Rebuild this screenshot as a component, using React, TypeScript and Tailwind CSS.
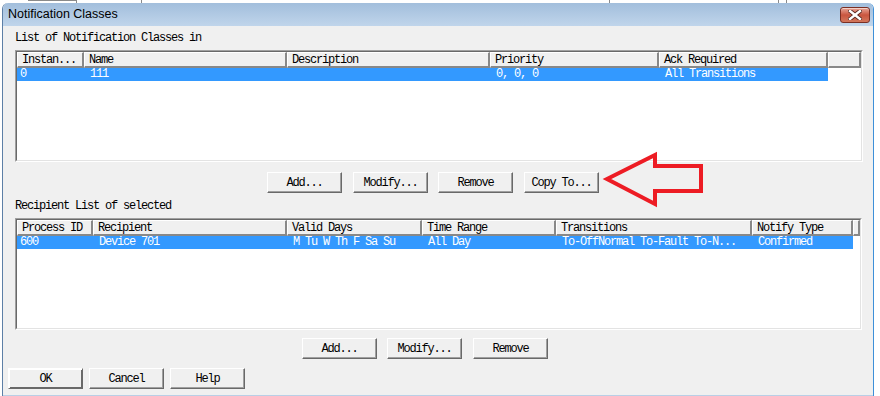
import React from "react";

type Col = { label: string; w: string; first?: boolean };

const classCols: Col[] = [
  { label: "Instan...", w: "w-[67px]", first: true },
  { label: "Name", w: "w-[203px]" },
  { label: "Description", w: "w-[203px]" },
  { label: "Priority", w: "w-[169px]" },
  { label: "Ack Required", w: "w-[169px]" },
];
const classRow = ["0", "111", "", "0, 0, 0", "All Transitions"];

const recipCols: Col[] = [
  { label: "Process ID", w: "w-[76px]", first: true },
  { label: "Recipient", w: "w-[194px]" },
  { label: "Valid Days", w: "w-[135px]" },
  { label: "Time Range", w: "w-[134px]" },
  { label: "Transitions", w: "w-[196px]" },
  { label: "Notify Type", w: "w-[101px]" },
];
const recipRow = ["600", "Device 701", "M Tu W Th F Sa Su", "All Day", "To-OffNormal To-Fault To-N...", "Confirmed"];

function ListBox({ cols, row, width }: { cols: Col[]; row: string[]; width: string }) {
  return (
    <div className={`${width} h-[112px] border border-t-[#a0a0a0] border-l-[#a0a0a0] border-r-white border-b-white`}>
      <div className="h-full bg-white border border-t-[#696969] border-l-[#696969] border-r-[#e3e3e3] border-b-[#e3e3e3] flex flex-col">
        <div className="flex h-[16px] bg-[#f0f0f0]">
          {cols.map((c) => (
            <div
              key={c.label}
              className={`${c.w} shrink-0 h-full border-t border-l border-t-white border-l-white border-r-2 border-b-2 border-r-[#888888] border-b-[#888888] pl-[4px] leading-[14px] whitespace-pre overflow-hidden`}
            >
              {c.label}
            </div>
          ))}
          <div className="flex-1 h-full border-t border-l border-t-white border-l-white border-r-2 border-b-2 border-r-[#888888] border-b-[#888888]" />
        </div>
        <div className="flex h-[13px]">
          <div className="flex bg-[#3399ff] text-white">
            {cols.map((c, i) => (
              <div
                key={c.label}
                className={`${c.w} shrink-0 h-full leading-[13px] whitespace-pre overflow-hidden ${c.first ? "pl-[3px]" : "pl-[6px]"}`}
              >
                {row[i]}
              </div>
            ))}
          </div>
        </div>
      </div>
    </div>
  );
}

function Btn({ label, className = "" }: { label: string; className?: string }) {
  return (
    <div
      className={`w-[75px] h-[21px] shrink-0 flex items-center justify-center bg-[#f0f0f0] border border-t-white border-l-white border-r-[#696969] border-b-[#696969] shadow-[inset_-1px_-1px_0_#a0a0a0] whitespace-pre ${className}`}
    >
      {label}
    </div>
  );
}

function CloseIcon() {
  return (
    <svg width="14" height="10" viewBox="0 0 14 10">
      <path d="M2 1 L12 9 M12 1 L2 9" stroke="#5a2a22" strokeWidth="4.2" strokeLinecap="square" />
      <path d="M2 1 L12 9 M12 1 L2 9" stroke="#ffffff" strokeWidth="2.4" strokeLinecap="square" />
    </svg>
  );
}

export default function App() {
  return (
    <div className="relative w-[880px] h-[396px] bg-white overflow-hidden text-[12px] tracking-[-1.2px] text-black font-['Liberation_Mono',monospace]">
      {/* window behind */}
      <div className="flex h-[3px] bg-white">
        <div className="w-[28px]" />
        <div className="w-[49px] border-t border-r border-[#8a8a8a]" />
        <div className="w-[65px] border-r border-[#8a8a8a]" />
        <div className="w-[468px] border-r border-[#8a8a8a]" />
        <div className="w-[169px] border-r border-[#8a8a8a]" />
        <div className="w-[8px] border-r border-[#8a8a8a]" />
      </div>

      <div className="ml-[2px] w-[872px] h-[393px] flex flex-col border-l border-r border-l-[#5d7fa6] border-r-[#3d8fd8] rounded-t-[6px] overflow-hidden">
        {/* title bar */}
        <div className="h-[23px] flex justify-between bg-gradient-to-b from-[#a2bedc] to-[#c0d5eb] pl-[5px] pr-[3px]">
          <div className="flex items-center text-[12.5px] tracking-normal text-black font-['Liberation_Sans',Arial,sans-serif]">
            Notification Classes
          </div>
          <div className="pt-[4px]">
            <div className="w-[30px] h-[16px] rounded-[3px] border border-[#7a2f24] bg-gradient-to-b from-[#e6a597] via-[#c9553f] to-[#d2775c] flex items-center justify-center shadow-[inset_0_1px_0_rgba(255,255,255,0.5)]">
              <CloseIcon />
            </div>
          </div>
        </div>

        {/* client */}
        <div className="flex-1 bg-[#f0f0f0] pl-[12px] pt-[6px] border-b border-[#b9cfe6] flex flex-col">
          <div className="h-[12px] leading-[13px]">List of Notification Classes in</div>
          <div className="mt-[6px]">
            <ListBox cols={classCols} row={classRow} width="w-[848px]" />
          </div>

          <div className="mt-[10px] flex pl-[252px]">
            <Btn label="Add..." />
            <Btn label="Modify..." className="ml-[11px]" />
            <Btn label="Remove" className="ml-[10px]" />
            <Btn label="Copy To..." className="ml-[11px]" />
          </div>

          <div className="mt-[7px] h-[12px] leading-[13px]">Recipient List of selected</div>
          <div className="mt-[6px]">
            <ListBox cols={recipCols} row={recipRow} width="w-[847px]" />
          </div>

          <div className="mt-[8px] flex pl-[287px]">
            <Btn label="Add..." />
            <Btn label="Modify..." className="ml-[10px]" />
            <Btn label="Remove" className="ml-[11px]" />
          </div>

          <div className="mt-[9px] flex -ml-[7px] gap-[6px]">
            <Btn label="OK" className="h-[20px] border-[#3a3a3a] shadow-[inset_1px_1px_0_#ffffff,inset_-1px_-1px_0_#696969]" />
            <Btn label="Cancel" className="h-[20px]" />
            <Btn label="Help" className="h-[20px]" />
          </div>
        </div>
      </div>

      {/* annotation arrow */}
      <svg className="absolute left-[598px] top-[148px]" width="110" height="62" viewBox="0 0 110 62">
        <polygon
          points="9,31 57,7 57,18 103,18 103,43 57,43 57,56"
          fill="none"
          stroke="#ed1c24"
          strokeWidth="4"
          strokeLinejoin="miter"
        />
      </svg>
    </div>
  );
}
